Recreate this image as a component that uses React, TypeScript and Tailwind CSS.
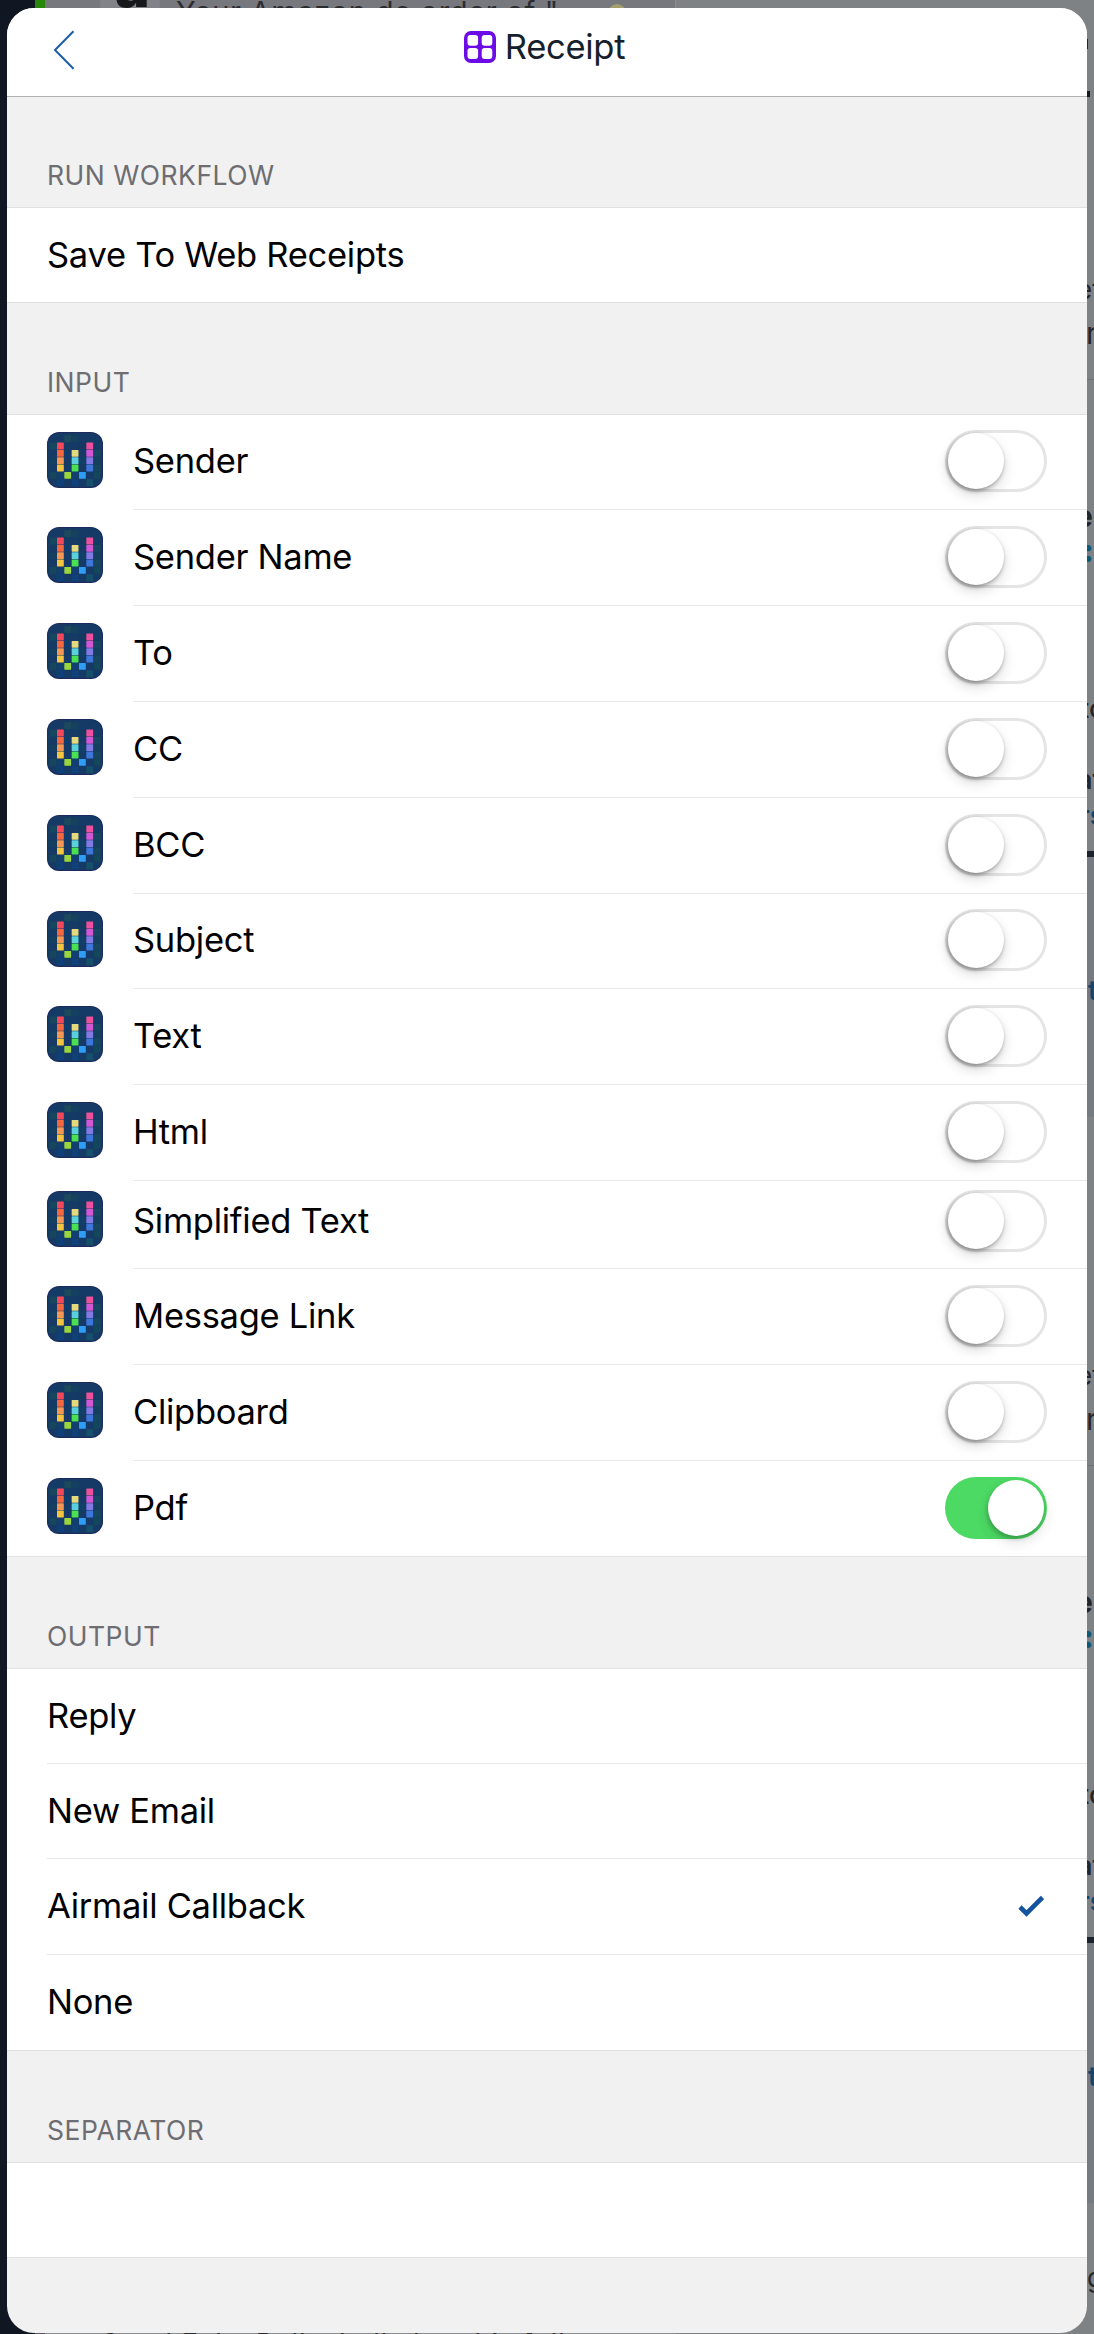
import React from "react";

const inputs: [string, string][] = [
  ["Sender", "h-[95px]"],
  ["Sender Name", "h-[96px]"],
  ["To", "h-[96px]"],
  ["CC", "h-[96px]"],
  ["BCC", "h-[96px]"],
  ["Subject", "h-[95px]"],
  ["Text", "h-[96px]"],
  ["Html", "h-[96px]"],
  ["Simplified Text", "h-[88px]"],
  ["Message Link", "h-[96px]"],
  ["Clipboard", "h-[96px]"],
  ["Pdf", "h-[95px]"],
];

const outputs: [string, string][] = [
  ["Reply", "h-[95px]"],
  ["New Email", "h-[95px]"],
  ["Airmail Callback", "h-[96px]"],
  ["None", "h-[95px]"],
];

/* column, row, colour of each lit tile */
const tiles: [number, number, string][] = [
  [0, 0, "#f4475a"],
  [0, 1, "#f4683f"],
  [0, 2, "#f59755"],
  [0, 3, "#f6c43e"],
  [1, 4, "#9bd540"],
  [2, 1, "#e6d97b"],
  [2, 2, "#5ccfdc"],
  [2, 3, "#4be054"],
  [3, 4, "#2f9df6"],
  [4, 0, "#ec4f9b"],
  [4, 1, "#d356d6"],
  [4, 2, "#8279e2"],
  [4, 3, "#3f76da"],
];

const dimTiles: [number, number, string][] = [
  [1, -1, "#1c4a5c"],
  [2, -1, "#15405f"],
  [-1, 0, "#17475e"],
  [3, 0, "#16395f"],
  [5, 1, "#17475e"],
  [1, 1, "#123a6a"],
  [5, 2, "#14405f"],
  [-1, 2, "#14405f"],
  [3, 2, "#123f68"],
  [5, 3, "#17475e"],
  [-1, 4, "#17475e"],
  [0, 4, "#123f70"],
  [2, 4, "#123f70"],
  [5, 4, "#14465c"],
  [4, 5, "#17506a"],
  [0, 5, "#10407a"],
  [2, 5, "#10407a"],
];

function WorkflowIcon() {
  return (
    <svg className="size-[56px] shrink-0" viewBox="0 0 56 56">
      <rect width="56" height="56" rx="12" fill="#1b2b5c" />
      <rect x="1" y="1" width="54" height="54" rx="11" fill="#153a66" />
      {dimTiles.map(([c, r, f]) => (
        <rect key={`d${c}${r}`} x={10 + c * 7.33} y={10.6 + r * 7.33} width="6.9" height="6.9" fill={f} />
      ))}
      {tiles.map(([c, r, f]) => (
        <rect key={`t${c}${r}`} x={10 + c * 7.33} y={10.6 + r * 7.33} width="6.8" height="6.8" rx="0.4" fill={f} />
      ))}
    </svg>
  );
}

function Toggle({ on }: { on: boolean }) {
  return on ? (
    <div className="flex h-[62px] w-[102px] justify-end rounded-full bg-[#4cd964] p-[3px]">
      <div className="size-[56px] rounded-full bg-white shadow-[-1px_3px_4px_rgba(0,0,0,0.2),0_6px_14px_rgba(0,0,0,0.12)]" />
    </div>
  ) : (
    <div className="flex h-[62px] w-[102px] rounded-full border-[3px] border-[#e5e5e5] bg-white">
      <div className="size-[56px] rounded-full bg-white shadow-[-1px_2px_4px_rgba(0,0,0,0.36),0_6px_14px_rgba(0,0,0,0.14)]" />
    </div>
  );
}

function Heading({ children, size = "h-[112px]" }: { children: string; size?: string }) {
  return (
    <div
      className={`flex items-end border-b border-[#e0e0e1] bg-[#f1f1f1] pb-[12px] pl-[40px] text-[26.5px] leading-[40px] tracking-[0.5px] text-[#6d6d72] ${size}`}
    >
      {children}
    </div>
  );
}

/* Page behind the sheet, visible along its right edge */
const glimpses: { y: number; x: number; text: string; style: string }[] = [
  { y: 274, x: -10, text: "ef", style: "text-[26px] text-[#23272b]" },
  { y: 317, x: -1, text: "r", style: "text-[30px] text-[#23272b]" },
  { y: 500, x: -12, text: "e", style: "text-[30px] font-bold text-[#23272b]" },
  { y: 535, x: -5, text: ":", style: "text-[32px] font-black text-[#0e5878]" },
  { y: 693, x: -7, text: "to", style: "text-[27px] font-medium text-[#23272b]" },
  { y: 764, x: -10, text: "at", style: "text-[27px] font-semibold text-[#23272b]" },
  { y: 800, x: -8, text: "rs", style: "text-[27px] font-semibold text-[#12466a]" },
  { y: 975, x: 1, text: "t", style: "text-[27px] font-semibold text-[#12466a]" },
];

function Backdrop() {
  return (
    <div className="absolute inset-0 flex">
      <div className="w-[35px] bg-[#111722]" />
      <div className="flex w-[10px] flex-col justify-between bg-[#77787d]">
        <div className="h-[10px] bg-[#26870a]" />
        <div className="h-[4px] bg-[#5a5666]" />
      </div>
      <div className="relative w-[630px] overflow-hidden bg-[#77787d]">
        <div className="absolute top-[-24px] left-[55px] size-[60px] rounded-full bg-[#828388]" />
        <span className="absolute top-[-43px] left-[70px] text-[58px] leading-none font-black text-[#17181b]">a</span>
        <span className="absolute top-[-3px] left-[131px] text-[29px] leading-none tracking-[0.7px] whitespace-nowrap text-[#2b2c30]">
          Your Amazon.de order of "
        </span>
        <div className="absolute top-[4px] left-[563px] size-[18px] rounded-full bg-[#a1a06b]" />
        <div className="absolute bottom-0 left-0 h-[6px] w-full bg-[#8a8b8e]" />
        <span className="absolute bottom-[-23px] left-[55px] text-[27px] leading-none tracking-[1px] whitespace-nowrap text-[#2b2c30]">
          Good Ecke Bully, holla hat this full
        </span>
      </div>
      <div className="w-[412px] border-l border-[#8b8e91] bg-[#7f8285]" />
      <div className="relative w-[7px] overflow-hidden bg-[#7f8285]">
        <div className="absolute top-[39px] h-[10px] w-px bg-[#23272b]" />
        <div className="absolute top-[91px] h-[6px] w-[3px] bg-[#15191d]" />
        {[0, 1086].map((o) => (
          <React.Fragment key={o}>
            <div className="absolute h-px w-full bg-[#6f7275]" style={{ top: 379 + o }} />
            <div className="absolute h-[260px] w-full bg-[#757b80]" style={{ top: 857 + o }} />
            <div className="absolute h-[6px] w-full bg-[#1b222c]" style={{ top: 851 + o }} />
            {glimpses.map((g) => (
              <span
                key={g.y}
                className={`absolute leading-[32px] whitespace-nowrap ${g.style}`}
                style={{ top: g.y + o, left: g.x }}
              >
                {g.text}
              </span>
            ))}
          </React.Fragment>
        ))}
        <span className="absolute top-[2262px] left-[0px] text-[26px] leading-[32px] text-[#23272b]">g</span>
      </div>
    </div>
  );
}

export default function App() {
  return (
    <div className="relative h-[2334px] w-[1094px] overflow-hidden pt-[8px] pl-[7px] font-['Inter',sans-serif]">
      <Backdrop />
      <div className="relative h-[2325px] w-[1080px] overflow-hidden rounded-[27px] bg-[#f1f1f1] text-[34.5px] leading-[44px] tracking-[-0.28px] text-black">
        <header className="relative flex h-[89px] items-center justify-center border-b border-[#b0b0b2] bg-white pr-[3px] pb-[10px] text-[#15202b]">
          <svg className="absolute top-[22px] left-[46px] h-[40px] w-[22px]" viewBox="0 0 22 40" fill="none">
            <path d="M20.5 1.2 L2 20 L20.5 38.8" stroke="#1c5da6" strokeWidth="2" />
          </svg>
          <svg className="mr-[9px] ml-[-2px] size-[32px]" viewBox="0 0 32 32">
            <rect width="32" height="32" rx="7" fill="#6b0be6" />
            <g fill="#fff">
              <rect x="3.5" y="4" width="10.6" height="10.7" rx="3" />
              <rect x="17.7" y="4" width="10.6" height="10.7" rx="3" />
              <rect x="3.5" y="17" width="10.6" height="11" rx="3" />
              <rect x="17.7" y="17" width="10.6" height="11" rx="3" />
            </g>
          </svg>
          <h1>Receipt</h1>
        </header>

        <Heading size="h-[111px]">RUN WORKFLOW</Heading>
        <div className="flex h-[95px] items-center border-b border-[#e0e0e1] bg-white pb-px pl-[40px]">
          Save To Web Receipts
        </div>

        <Heading>INPUT</Heading>
        <div className="border-b border-[#e0e0e1] bg-white">
          {inputs.map(([label, h], i) => (
            <div key={label} className={`flex pl-[40px] ${h}`}>
              <div className={`w-[86px] ${label === "Simplified Text" ? "pt-[10px]" : "pt-[17px]"}`}>
                <WorkflowIcon />
              </div>
              <div
                className={`flex flex-1 items-center justify-between pr-[40px] ${
                  i < 11 ? "border-b border-[#e8e8e9]" : ""
                } ${label === "Simplified Text" ? "pb-[8px]" : "pb-[2px]"}`}
              >
                <span>{label}</span>
                <Toggle on={label === "Pdf"} />
              </div>
            </div>
          ))}
        </div>

        <Heading>OUTPUT</Heading>
        <div className="border-b border-[#e0e0e1] bg-white">
          {outputs.map(([label, h], i) => (
            <div key={label} className={`pl-[40px] ${h}`}>
              <div
                className={`flex h-full items-center justify-between pr-[43px] pb-px ${
                  i < 3 ? "border-b border-[#e8e8e9]" : ""
                }`}
              >
                <span>{label}</span>
                {label === "Airmail Callback" && (
                  <svg className="h-[22px] w-[26px]" viewBox="0 0 26 22" fill="none">
                    <path d="M2 12 L8.5 18.5 L24.5 2.5" stroke="#14549f" strokeWidth="4.6" />
                  </svg>
                )}
              </div>
            </div>
          ))}
        </div>

        <Heading>SEPARATOR</Heading>
        <div className="h-[95px] border-b border-[#e0e0e1] bg-white" />
      </div>
    </div>
  );
}
